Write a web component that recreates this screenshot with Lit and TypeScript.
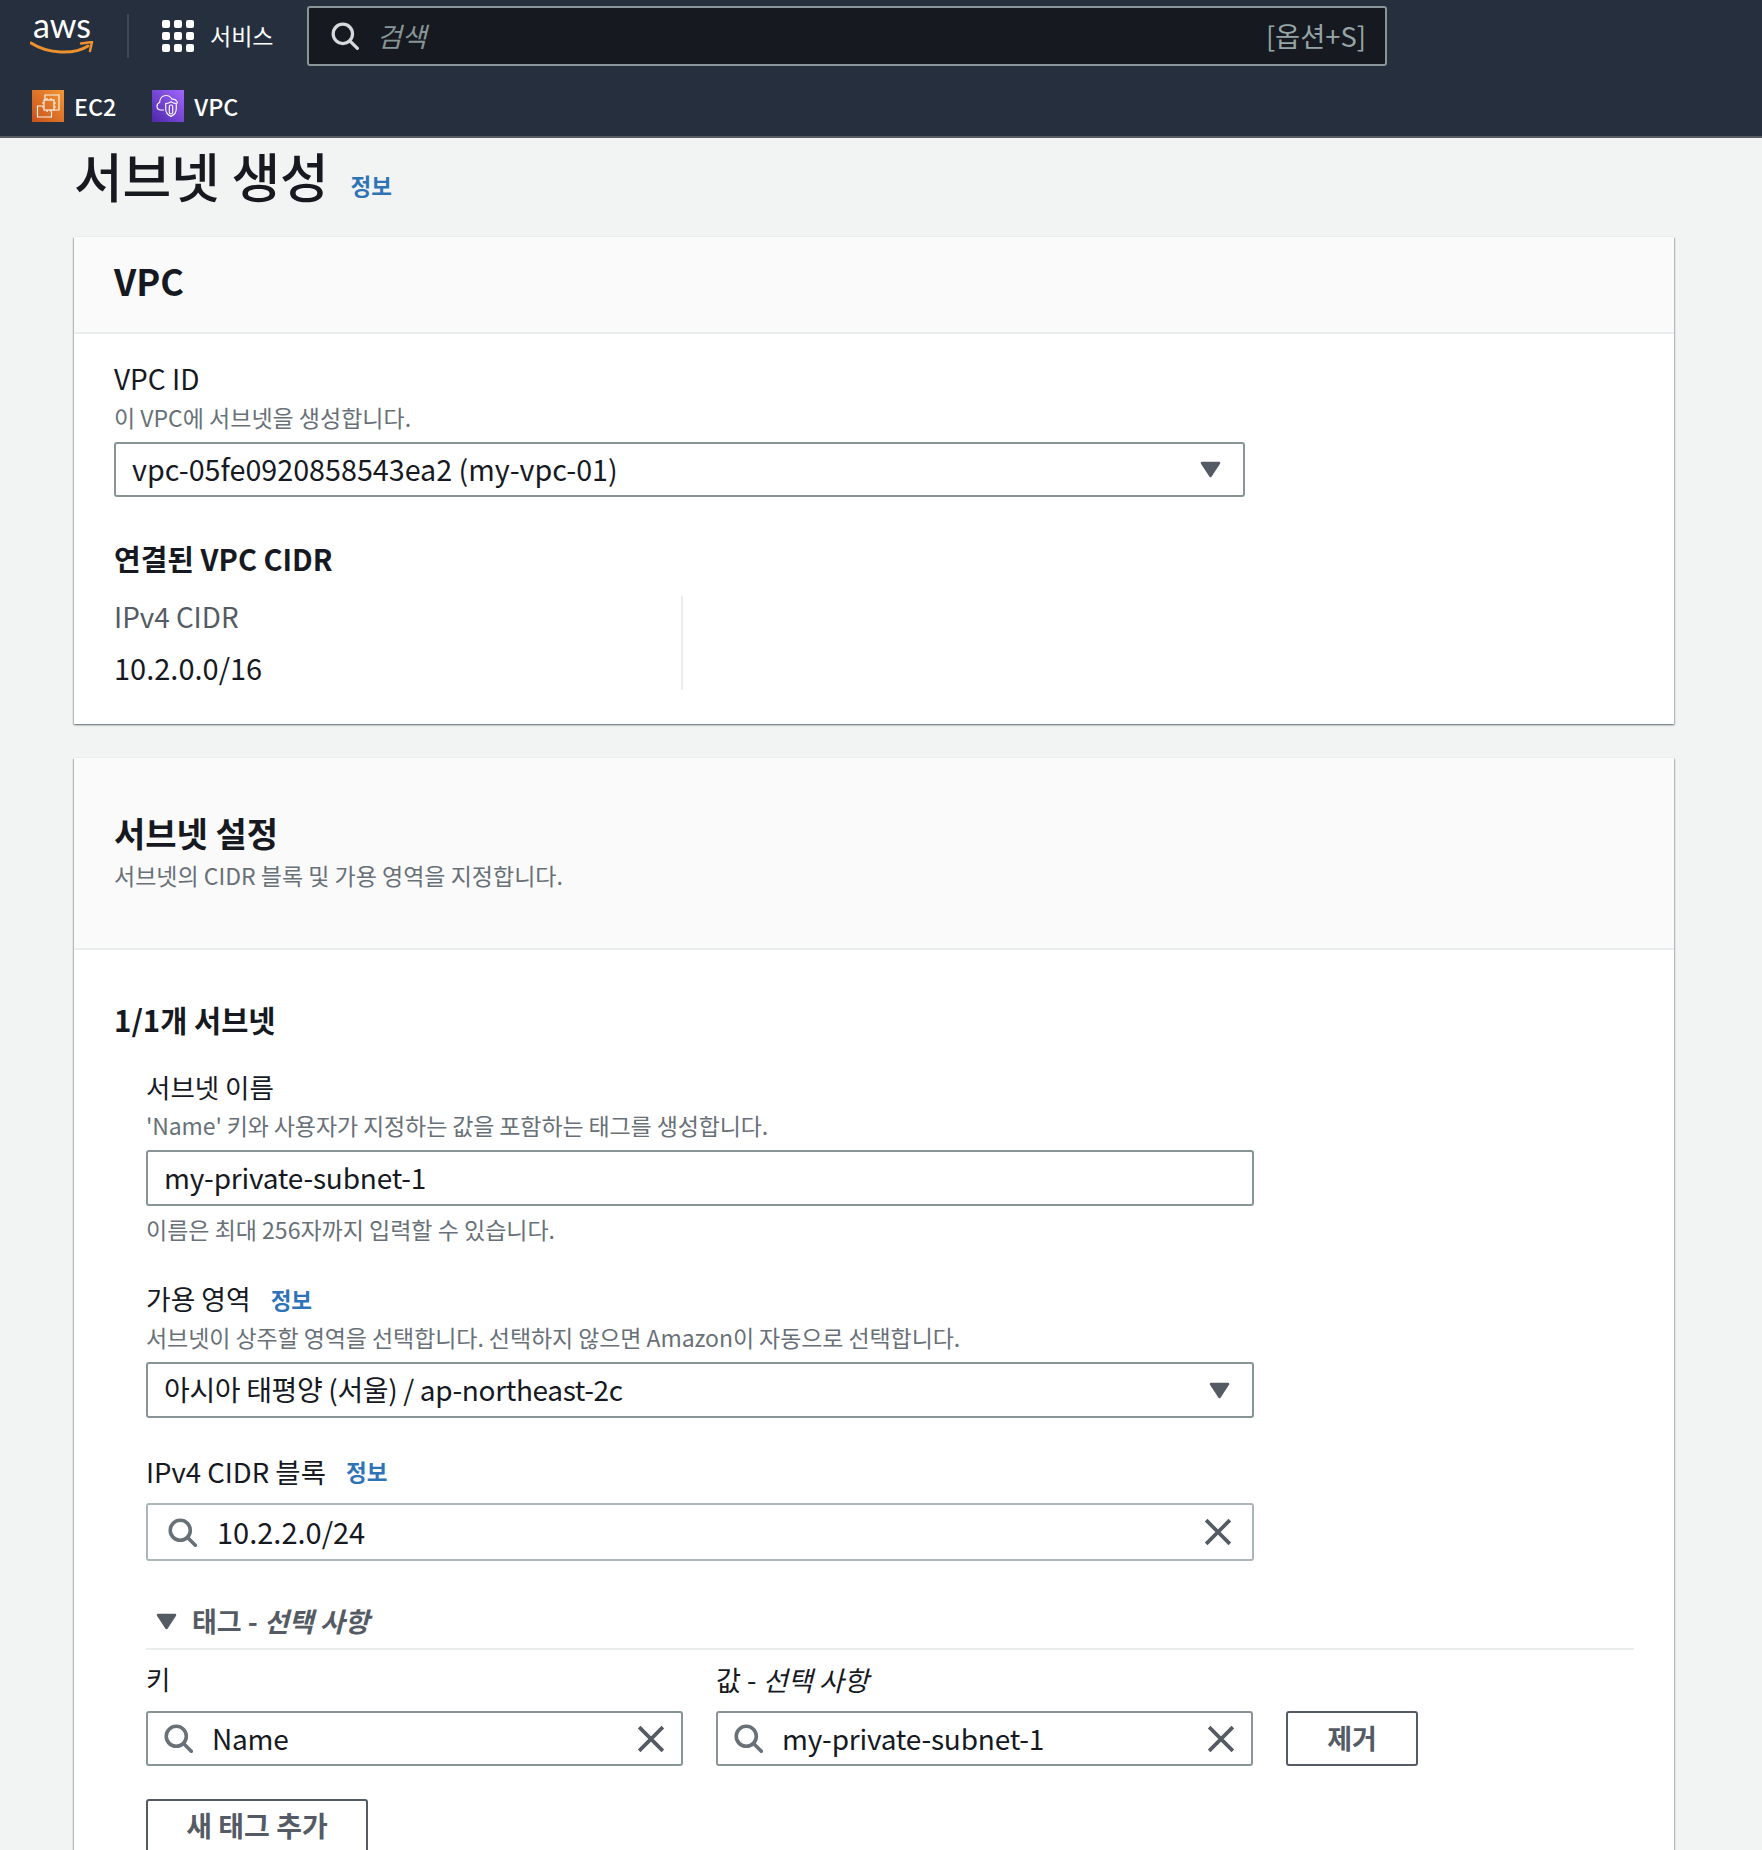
import { LitElement, html, css } from "lit";
import { customElement } from "lit/decorators.js";

const mag = (size: number, color: string, sw = 3.2) => html`<svg class="ic" width=${size} height=${size} viewBox="0 0 26 26" fill="none" stroke=${color} stroke-width=${sw}><circle cx="11" cy="11" r="9"/><path d="M17.5 17.5L24.500 24.500" stroke-linecap="round"/></svg>`;
const cross = (size: number) => html`<svg class="ic" width=${size} height=${size} viewBox="0 0 26 26" fill="none" stroke="#545b64" stroke-width="3.4"><path d="M2 2L24 24M24 2L2 24"/></svg>`;
const caret = html`<svg class="ic" width="21" height="17" viewBox="0 0 21 17"><path d="M2 2H19L10.500 15Z" fill="#545b64" stroke="#545b64" stroke-width="2.500" stroke-linejoin="round"/></svg>`;

@customElement("app-root")
export class AppRoot extends LitElement {
  static styles = css`
    :host { display: block; width: 1762px; height: 1850px; overflow: hidden; background: #f2f3f3; color: #16191f;
      font-family: "Noto Sans CJK KR", "Noto Sans", sans-serif; font-size: 24px; }
    .ic { display: block; flex: none; }
    header { height: 138px; box-sizing: border-box; background: #252f3e; border-bottom: 2px solid #545b64; color: #fff; }
    .top { height: 72px; display: flex; align-items: center; }
    .logo { width: 66px; margin-left: 30px; height: 44px; }
    .logo span { display: block; font: 400 34px/22px Lato, sans-serif; color: #fff; margin-left: 3px; }
    .logo svg { display: block; margin-top: 5px; }
    .sep { width: 2px; height: 44px; background: #414750; margin: 0 33px 0 31px; }
    .grid { display: grid; grid-template-columns: repeat(3, 8px); grid-auto-rows: 8px; gap: 4px; }
    .grid i { background: #fff; border-radius: 2px; }
    .svc { margin: 0 35px 0 16px; font-size: 23px; line-height: 30px; width: 62px; white-space: nowrap; padding-bottom: 2px; }
    .search { width: 1080px; height: 60px; box-sizing: border-box; background: #16191f; border: 2px solid #879596; border-radius: 3px;
      display: flex; align-items: center; padding: 0 19px 0 22px; }
    .search em { margin-left: 18px; color: #879596; font-size: 27px; flex: 1; padding-bottom: 2px; }
    .search b { font-weight: 400; color: #95a5a6; font-size: 27.3px; padding-bottom: 2px; }
    .fav { height: 64px; box-sizing: border-box; padding: 4px 0 0 32px; display: flex; align-items: center; font-size: 23.3px; font-weight: 500; }
    .fav svg { margin-right: 10px; }
    .fav span { margin-right: 36px; }
    .title { display: flex; margin: 4px 0 0 74px; height: 62px; }
    h1 { margin: 0; font-size: 53px; line-height: 66px; font-weight: 500; letter-spacing: -.2px; }
    .info { color: #2f73b7; font-size: 22.500px; line-height: 34px; font-weight: 700; }
    .title .info { margin: 26px 0 0 22px; }
    .card { margin: 0 88px 0 74px; background: #fff; box-shadow: 0 1px 2px 0 rgba(0,28,36,.4), 1px 1px 1px 0 rgba(0,28,36,.15), -1px 1px 1px 0 rgba(0,28,36,.15); }
    .card.c1 { margin-top: 33px; height: 487px; }
    .card.c2 { margin-top: 34px; height: 1200px; }
    .ch { background: #fafafa; border-bottom: 2px solid #eaeded; padding: 0 40px; box-sizing: border-box; }
    .c1 .ch { height: 97px; display: flex; align-items: center; padding-bottom: 9px; }
    .c2 .ch { height: 192px; padding-top: 53px; }
    h2 { margin: 0; font-size: 36px; line-height: 44px; font-weight: 700; }
    .c2 h2 { font-size: 34px; }
    .cb { padding: 26px 40px 0; }
    .lab { font-size: 26.500px; line-height: 36px; }
    .lab.latin { font-size: 28px; }
    .lab.mid { font-size: 26.800px; }
    .lab.wide { font-size: 27.500px; }
    .desc { font-size: 23px; line-height: 34px; color: #687078; }
    .c2 .ch .desc { margin-top: 3px; }
    .c1 .desc { margin-top: 4px; }
    .fld { box-sizing: border-box; height: 55px; border: 2px solid #879596; border-radius: 3px; display: flex; align-items: center; font-size: 28px; padding: 0 22px 0 16px; background: #fff; }
    .fld span { flex: 1; white-space: nowrap; padding-bottom: 2px; }
    .c1 .fld { margin-top: 8px; }
    .f1 { width: 1131px; }
    .t-vpc { font-size: 28.700px; }
    .t-my { letter-spacing: -.2px; }
    .t-asia { letter-spacing: -.35px; }
    .t-num { font-size: 29px; }
    h3 { margin: 41px 0 0; font-size: 29px; line-height: 40px; font-weight: 700; }
    .cols { display: flex; height: 94px; margin-top: 18px; }
    .col { width: 567px; border-right: 2px solid #eaeded; }
    .k { font-size: 27.800px; line-height: 40px; color: #545b64; }
    .v { font-size: 29px; line-height: 40px; margin-top: 11px; }
    .sub { padding-top: 49px; }
    .sub h3 { margin: 0; font-size: 29.500px; }
    .form { margin-left: 32px; }
    .lab1 { margin-top: 30px; }
    .d1 { margin-top: 3px; letter-spacing: -.12px; }
    .f2 { width: 1108px; height: 56px; }
    .d1 + .f2 { margin-top: 8px; }
    .row { display: flex; align-items: center; gap: 20px; }
    .hint { margin-top: 6px; }
    .mt35 { margin-top: 35px; }
    .d2 { margin-top: 3px; letter-spacing: -.08px; }
    .d2 + .f2 { margin-top: 8px; }
    .cidr { height: 58px; border-color: #aab7b8; margin-top: 14px; gap: 20px; padding: 0 20px 0 20px; }
    .tagh { margin: 41px 0 0; height: 48px; border-bottom: 2px solid #eaeded; width: 1488px; box-sizing: border-box; display: flex; align-items: flex-start; color: #545b64; font-size: 27px; line-height: 38px; font-weight: 700; padding-left: 10px; }
    .tagh svg { margin: 11px 15px 0 0; }
    .tagh em { font-weight: 700; }
    .tagrow { display: flex; margin-top: 11px; }
    .tagrow > div { width: 537px; margin-right: 33px; }
    .tagrow .lab.val { font-size: 27.200px; }
    .tf { margin-top: 14px; gap: 19px; padding: 0 16px; }
    .btn { box-sizing: border-box; border: 2px solid #545b64; border-radius: 3px; background: #fff; color: #545b64; font-weight: 700; display: flex; align-items: center; justify-content: center; font-family: inherit; padding: 0; }
    .rm { width: 132px; height: 55px; margin-top: 50px; font-size: 27px; padding-bottom: 2px; }
    .add { width: 222px; height: 60px; margin-top: 33px; font-size: 28px; padding-bottom: 8px; }
  `;

  render() {
    return html`
      <header>
        <div class="top">
          <div class="logo">
            <span>aws</span>
            <svg width="64" height="14" viewBox="0 0 64 14" fill="none"><path d="M1 2C18 13 44 14 58 5" stroke="#ec912d" stroke-width="3" stroke-linecap="round"/><path d="M51 2.500L62 1L60 10" stroke="#ec912d" stroke-width="2.500" stroke-linecap="round" stroke-linejoin="round"/></svg>
          </div>
          <div class="sep"></div>
          <div class="grid">${Array.from({ length: 9 }, () => html`<i></i>`)}</div>
          <div class="svc">서비스</div>
          <div class="search">
            ${mag(28, "#d5dbdb", 3)}
            <em>검색</em><b>[옵션+S]</b>
          </div>
        </div>
        <div class="fav">
          <svg width="32" height="32" viewBox="0 0 32 32">
            <defs><linearGradient id="o" x1="0" y1="1" x2="1" y2="0"><stop offset="0" stop-color="#c8511b"/><stop offset="1" stop-color="#f29633"/></linearGradient></defs>
            <rect width="32" height="32" fill="url(#o)"/>
            <g fill="none" stroke="#fff" stroke-width="1.200" opacity=".9"><path d="M22 20h5V5H13v5"/><path d="M11 16H5.500v11h14v-5"/><rect x="12" y="10" width="10" height="10"/><path d="M15 8v2M19 8v2M15 20v2M19 20v2M10 13h2M10 17h2M22 13h2M22 17h2"/></g>
          </svg>
          <span>EC2</span>
          <svg width="32" height="32" viewBox="0 0 32 32">
            <defs><linearGradient id="p" x1="0" y1="1" x2="1" y2="0"><stop offset="0" stop-color="#4d27a8"/><stop offset="1" stop-color="#a166ff"/></linearGradient></defs>
            <rect width="32" height="32" fill="url(#p)"/>
            <g fill="none" stroke="#fff" stroke-width="1.200" opacity=".95"><path d="M12 20H9c-2.500 0-4-1.700-4-3.800 0-1.800 1-3.100 2.600-3.700C8 8 10.800 5.500 14 5.500c2.600 0 4.700 1.400 5.800 3.600 2.800-.4 5.400 1.500 5.700 4.400"/><path d="M13.700 13.700c2.200-.3 4-1 5.300-2 1.300 1 3.100 1.700 5.300 2v5c0 3.800-2.300 6.300-5.300 7.700-3-1.400-5.300-3.900-5.300-7.700z"/><rect x="17.300" y="15" width="3.400" height="9" rx="1.700"/></g>
          </svg>
          <span>VPC</span>
        </div>
      </header>
      <div class="title"><h1>서브넷 생성</h1><a class="info">정보</a></div>

      <section class="card c1">
        <div class="ch"><h2>VPC</h2></div>
        <div class="cb">
          <div class="lab latin">VPC ID</div>
          <div class="desc">이 VPC에 서브넷을 생성합니다.</div>
          <div class="fld f1"><span class="t-vpc">vpc-05fe0920858543ea2 (my-vpc-01)</span>${caret}</div>
          <h3>연결된 VPC CIDR</h3>
          <div class="cols"><div class="col"><div class="k">IPv4 CIDR</div><div class="v">10.2.0.0/16</div></div></div>
        </div>
      </section>

      <section class="card c2">
        <div class="ch"><h2>서브넷 설정</h2><div class="desc">서브넷의 CIDR 블록 및 가용 영역을 지정합니다.</div></div>
        <div class="cb sub">
          <h3>1/1개 서브넷</h3>
          <div class="form">
            <div class="lab lab1">서브넷 이름</div>
            <div class="desc d1">'Name' 키와 사용자가 지정하는 값을 포함하는 태그를 생성합니다.</div>
            <div class="fld f2"><span class="t-my">my-private-subnet-1</span></div>
            <div class="desc hint">이름은 최대 256자까지 입력할 수 있습니다.</div>
            <div class="lab mid row mt35">가용 영역 <a class="info">정보</a></div>
            <div class="desc d2">서브넷이 상주할 영역을 선택합니다. 선택하지 않으면 Amazon이 자동으로 선택합니다.</div>
            <div class="fld f2"><span class="t-asia">아시아 태평양 (서울) / ap-northeast-2c</span>${caret}</div>
            <div class="lab wide row mt35">IPv4 CIDR 블록 <a class="info">정보</a></div>
            <div class="fld f2 cidr">${mag(29, "#687078")}<span class="t-num">10.2.2.0/24</span>${cross(28)}</div>
            <div class="tagh">${caret}<div>태그 - <em>선택 사항</em></div></div>
            <div class="tagrow">
              <div><div class="lab">키</div><div class="fld tf">${mag(29, "#687078")}<span class="t-my">Name</span>${cross(28)}</div></div>
              <div><div class="lab val">값 - <em>선택 사항</em></div><div class="fld tf">${mag(29, "#687078")}<span class="t-my">my-private-subnet-1</span>${cross(28)}</div></div>
              <button class="btn rm">제거</button>
            </div>
            <button class="btn add">새 태그 추가</button>
          </div>
        </div>
      </section>
    `;
  }
}
